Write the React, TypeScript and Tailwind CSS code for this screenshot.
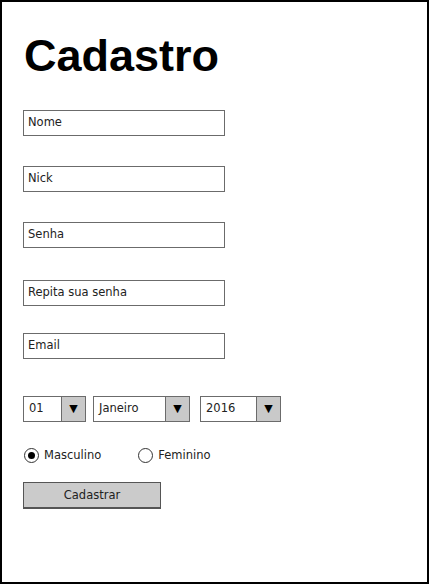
const sketch = { fontFamily: '"DejaVu Sans", "Noto Sans", sans-serif' };

function Field({ label, className }: { label: string; className?: string }) {
  return (
    <div
      className={`w-[202px] h-[26px] border-[1.5px] border-[#6b6b6b] bg-white flex items-center pl-[4px] text-[11.5px] text-[#222] ${className ?? ""}`}
      style={sketch}
    >
      {label}
    </div>
  );
}

function Select({ value, width }: { value: string; width: string }) {
  return (
    <div
      className={`${width} h-[26px] border-[1.5px] border-[#6b6b6b] bg-white flex text-[11.5px] text-[#222]`}
      style={sketch}
    >
      <div className="flex-1 flex items-center pl-[5px]">{value}</div>
      <div className="w-[24px] bg-[#c9c9c9] border-l-[1.5px] border-[#6b6b6b] flex items-center justify-center text-[11px] text-black">
        ▼
      </div>
    </div>
  );
}

function Radio({ label, checked }: { label: string; checked?: boolean }) {
  return (
    <div className="flex items-center gap-[5px] text-[11.5px] text-[#222]" style={sketch}>
      <span className="w-[15px] h-[15px] rounded-full border-[1.5px] border-[#333] bg-white flex items-center justify-center">
        {checked && <span className="w-[7px] h-[7px] rounded-full bg-black" />}
      </span>
      {label}
    </div>
  );
}

export default function App() {
  return (
    <div className="w-[429px] h-[584px] bg-white border-[2.5px] border-black box-border pl-[21px] pt-[31px]">
      <h1
        className="ml-[1px] text-[45px] leading-none font-bold text-black"
        style={{ fontFamily: '"Liberation Sans", Arial, sans-serif' }}
      >
        Cadastro
      </h1>

      <div className="flex flex-col">
        <Field label="Nome" className="mt-[32px]" />
        <Field label="Nick" className="mt-[30px]" />
        <Field label="Senha" className="mt-[30px]" />
        <Field label="Repita sua senha" className="mt-[32px]" />
        <Field label="Email" className="mt-[27px]" />
      </div>

      <div className="flex mt-[37px]">
        <Select value="01" width="w-[63px]" />
        <div className="ml-[7px]">
          <Select value="Janeiro" width="w-[97px]" />
        </div>
        <div className="ml-[10px]">
          <Select value="2016" width="w-[81px]" />
        </div>
      </div>

      <div className="flex mt-[25px] pl-[1px]">
        <Radio label="Masculino" checked />
        <div className="ml-[37px]">
          <Radio label="Feminino" />
        </div>
      </div>

      <button
        className="mt-[18px] w-[138px] h-[27px] bg-[#cbcbcb] border-[1.5px] border-[#555] border-b-2 text-[11.5px] text-[#222]"
        style={sketch}
      >
        Cadastrar
      </button>
    </div>
  );
}
